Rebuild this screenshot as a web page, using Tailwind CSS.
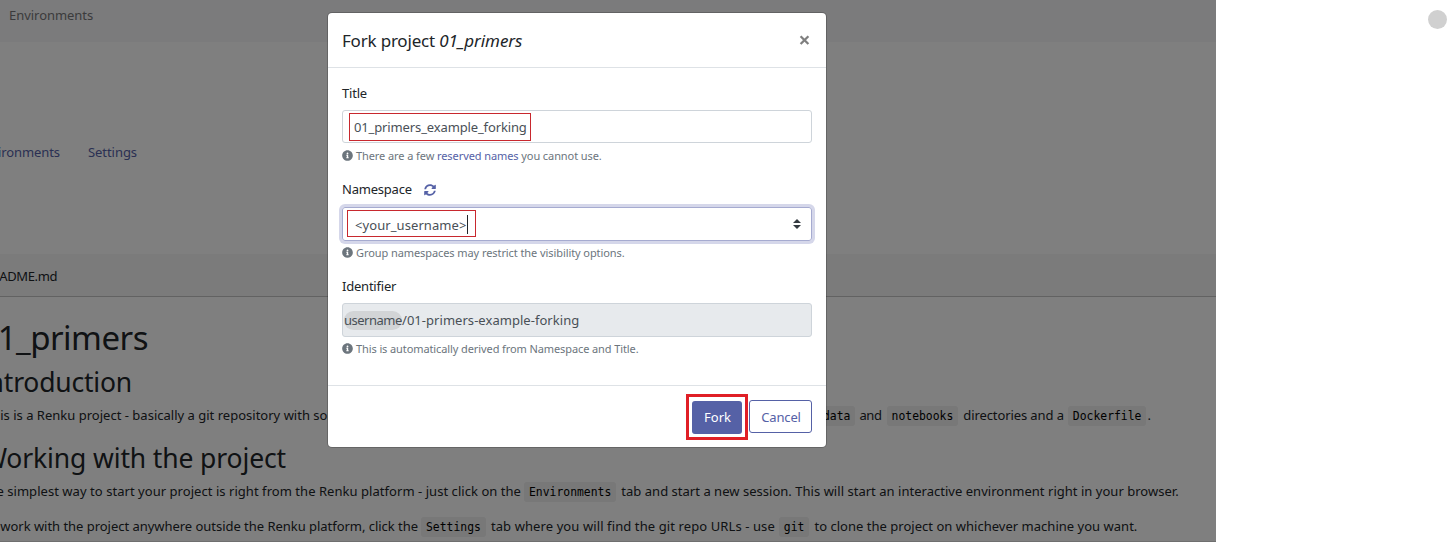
<!DOCTYPE html>
<html lang="en">
<head>
<meta charset="utf-8">
<title>Fork project</title>
<script src="https://cdn.jsdelivr.net/npm/@tailwindcss/browser@4"></script>
</head>
<body class="bg-white font-['Noto_Sans','Open_Sans',sans-serif] text-[13px] text-[#212529]">
<svg class="hidden">
  <symbol id="info" viewBox="0 0 512 512"><path fill="currentColor" d="M256 8C119.043 8 8 119.083 8 256c0 136.997 111.043 248 248 248s248-111.003 248-248C504 119.083 392.957 8 256 8zm0 110c23.196 0 42 18.804 42 42s-18.804 42-42 42-42-18.804-42-42 18.804-42 42-42zm56 254c0 6.627-5.373 12-12 12h-88c-6.627 0-12-5.373-12-12v-24c0-6.627 5.373-12 12-12h12v-64h-12c-6.627 0-12-5.373-12-12v-24c0-6.627 5.373-12 12-12h64c6.627 0 12 5.373 12 12v100h12c6.627 0 12 5.373 12 12v24z"/></symbol>
</svg>
<div class="flex h-[542px] w-[1447px] justify-between overflow-hidden">
  <div class="relative h-full w-[1216px] overflow-hidden bg-white whitespace-nowrap">
    <!-- page -->
    <div class="flex h-[42px] items-start bg-[#f6f6f8] pt-[6px] pl-[9px] leading-[19px] tracking-[-0.04px] text-[#77777a]">Environments</div>
    <div class="flex h-[212px] items-start pt-[100px] text-[#5561a6]">
      <div class="flex w-[60px] justify-end leading-[20px] tracking-[-0.1px]"><span>Environments</span></div>
      <div class="ml-[28px] leading-[20px] tracking-[-0.06px]">Settings</div>
    </div>
    <div class="flex h-[43px] items-center border-b border-[#c4c4c4] bg-[#f7f7f7] pt-[3px]">
      <div class="flex w-[57px] justify-end tracking-[-0.4px]"><span>README.md</span></div>
    </div>
    <div class="flex flex-col pt-[21px]">
      <div class="flex h-10 w-[148px] items-center justify-end text-[33px] tracking-[-0.5px]"><h1>01_primers</h1></div>
      <div class="mt-[9px] flex h-8 w-[132px] items-center justify-end text-[26.5px] tracking-[-0.2px]"><h2>Introduction</h2></div>
      <div class="mt-[6px] flex h-[22px] items-center">
        <div class="flex w-[347px] justify-end tracking-[0.01px]"><span>This is a Renku project - basically a git repository with some</span></div>
        <code class="ml-[471px] rounded-[3px] bg-[#f0f0f0] px-[5px] py-[2px] font-['DejaVu_Sans_Mono',monospace] text-[11.4px] leading-[16px] text-black">data</code>
        <span class="ml-[4px] tracking-[-0.4px]">and</span>
        <code class="ml-[5px] rounded-[3px] bg-[#f0f0f0] px-[5px] py-[2px] font-['DejaVu_Sans_Mono',monospace] text-[11.4px] leading-[16px] text-black">notebooks</code>
        <span class="ml-[5px] tracking-[-0.1px]">directories and a</span>
        <code class="ml-[4px] rounded-[3px] bg-[#f0f0f0] px-[5px] py-[2px] font-['DejaVu_Sans_Mono',monospace] text-[11.4px] leading-[16px] text-black">Dockerfile</code><span class="ml-px">.</span>
      </div>
      <div class="mt-4 flex h-8 w-[286px] items-center justify-end text-[26.5px] tracking-[-0.13px]"><h2>Working with the project</h2></div>
      <div class="mt-[6px] flex h-[22px] items-center">
        <div class="flex w-[521px] justify-end tracking-[0.046px]"><span>The simplest way to start your project is right from the Renku platform - just click on the</span></div>
        <code class="ml-[3px] rounded-[3px] bg-[#f0f0f0] px-[5px] py-[2px] font-['DejaVu_Sans_Mono',monospace] text-[11.4px] leading-[16px] text-black">Environments</code>
        <span class="ml-[5px] tracking-[0.026px]">tab and start a new session. This will start an interactive environment right in your browser.</span>
      </div>
      <div class="mt-[13px] flex h-[22px] items-center">
        <div class="flex w-[418px] justify-end tracking-[-0.034px]"><span>To work with the project anywhere outside the Renku platform, click the</span></div>
        <code class="ml-[3px] rounded-[3px] bg-[#f0f0f0] px-[5px] py-[2px] font-['DejaVu_Sans_Mono',monospace] text-[11.4px] leading-[16px] text-black">Settings</code>
        <span class="ml-[5px] tracking-[0.1px]">tab where you will find the git repo URLs - use</span>
        <code class="ml-[4px] rounded-[3px] bg-[#f0f0f0] px-[5px] py-[2px] font-['DejaVu_Sans_Mono',monospace] text-[11.4px] leading-[16px] text-black">git</code>
        <span class="ml-[5px] tracking-[0.02px]">to clone the project on whichever machine you want.</span>
      </div>
      <div class="mt-[3px] h-px bg-[#dedede]"></div>
    </div>

    <!-- backdrop and dialog -->
    <div class="absolute inset-0 bg-black/50">
      <div class="mt-[13px] ml-[328px] flex h-[434px] w-[498px] flex-col rounded bg-white shadow-[0_0_0_1px_rgba(0,0,0,0.2)]">
        <div class="flex h-[55px] items-center justify-between border-b border-[#dee2e6] pr-[16px] pl-[14px]">
          <h5 class="pt-px text-[17px] tracking-[-0.2px]">Fork project <em class="tracking-[-0.08px]">01_primers</em></h5>
          <svg class="size-[11px] text-[#7f7f7f]" viewBox="0 0 11 11"><path d="M1.6 1.2 9.4 9M9.4 1.2 1.6 9" stroke="currentColor" stroke-width="2.3"/></svg>
        </div>
        <div class="flex h-[317px] flex-col px-[14px] pt-[15px]">
          <label class="h-5 leading-5 tracking-[-0.2px]">Title</label>
          <div class="mt-[7px] flex h-[33px] items-center rounded-[3px] border border-[#ced4da] pl-[6px] text-[#495057]">
            <div class="flex h-[28px] w-[182px] items-center border border-[#c8282e] pt-[2px] pl-[4px] tracking-[-0.13px]">01_primers_example_forking</div>
          </div>
          <div class="mt-[3px] flex h-5 items-center gap-[3px] text-[11px] tracking-[-0.085px] text-[#6c757d]"><svg class="size-[11px] -translate-y-px"><use href="#info"/></svg><span>There are a few <a class="text-[#5561a6]">reserved names</a> you cannot use.</span></div>
          <label class="mt-[13px] flex h-5 items-center pt-[2px] tracking-[-0.22px]">Namespace
            <svg class="ml-[12px] size-[12px] text-[#5561a6]" viewBox="0 0 512 512"><path fill="currentColor" d="M370.72 133.28C339.458 104.008 298.888 87.962 255.848 88c-77.458.068-144.328 53.178-162.791 126.85-1.344 5.363-6.122 9.15-11.651 9.15H24.103c-7.498 0-13.194-6.807-11.807-14.176C33.933 94.924 134.813 8 256 8c66.448 0 126.791 26.136 171.315 68.685L463.03 40.97C478.149 25.851 504 36.559 504 57.941V192c0 13.255-10.745 24-24 24H345.941c-21.382 0-32.09-25.851-16.971-40.971l41.75-41.749zM32 296h134.059c21.382 0 32.09 25.851 16.971 40.971l-41.75 41.75c31.262 29.273 71.835 45.319 114.876 45.28 77.418-.07 144.315-53.144 162.787-126.849 1.344-5.363 6.122-9.15 11.651-9.15h57.304c7.498 0 13.194 6.807 11.807 14.176C478.067 417.076 377.187 504 256 504c-66.448 0-126.791-26.136-171.315-68.685L48.97 471.03C33.851 486.149 8 475.441 8 454.059V320c0-13.255 10.745-24 24-24z"/></svg>
          </label>
          <div class="mt-[8px] flex h-[34px] items-center justify-between rounded-[3px] border border-[#a6abd0] pr-[10px] pl-[4px] text-[#495057] shadow-[0_0_0_3px_#d5d7ea]">
            <div class="mb-px flex h-[27px] w-[129px] items-center border border-[#c8282e] pt-[4px] pl-[7px] tracking-[0.08px]">&lt;your_username&gt;<span class="mb-[2px] h-[19px] w-px bg-[#212529]"></span></div>
            <svg class="h-[10px] w-[8px]" viewBox="0 0 8 10"><path fill="#343a40" d="M4 0 8 4H0zM4 10 0 6h8z"/></svg>
          </div>
          <div class="mt-[2px] flex h-5 items-center gap-[3px] text-[11px] tracking-[-0.08px] text-[#6c757d]"><svg class="size-[11px] -translate-y-px"><use href="#info"/></svg><span>Group namespaces may restrict the visibility options.</span></div>
          <label class="mt-[13px] h-5 leading-5 tracking-[-0.22px]">Identifier</label>
          <div class="mt-[7px] flex h-[34px] items-center rounded-[3px] border border-[#ced4da] bg-[#e7eaed] pl-px text-[#495057]">
            <span class="flex h-[19px] w-[58px] items-center rounded-full bg-[#d2d4d6] pt-[2px] tracking-[-0.5px]">username</span><span class="pt-[2px] tracking-[0.04px]">/01-primers-example-forking</span>
          </div>
          <div class="mt-[2px] flex h-5 items-center gap-[3px] text-[11px] tracking-[-0.1px] text-[#6c757d]"><svg class="size-[11px] -translate-y-px"><use href="#info"/></svg><span>This is automatically derived from Namespace and Title.</span></div>
        </div>
        <div class="flex flex-1 items-start justify-end gap-px border-t border-[#dee2e6] pt-[8px] pr-[14px]">
          <div class="flex h-[46px] w-[62px] items-center justify-center border-3 border-[#e01f26]"><button class="h-[33px] w-[50px] rounded-[3px] bg-[#5561a6] pt-[2px] pl-px text-white">Fork</button></div>
          <button class="mt-[6px] h-[33px] w-[63px] rounded-[3px] border border-[#5561a6] pt-[2px] pl-px tracking-[-0.15px] text-[#5561a6]">Cancel</button>
        </div>
      </div>
    </div>
  </div>
  <div class="mt-[10px] size-[19px] rounded-full bg-[#d0d0d0]"></div>
</div>
</body>
</html>
